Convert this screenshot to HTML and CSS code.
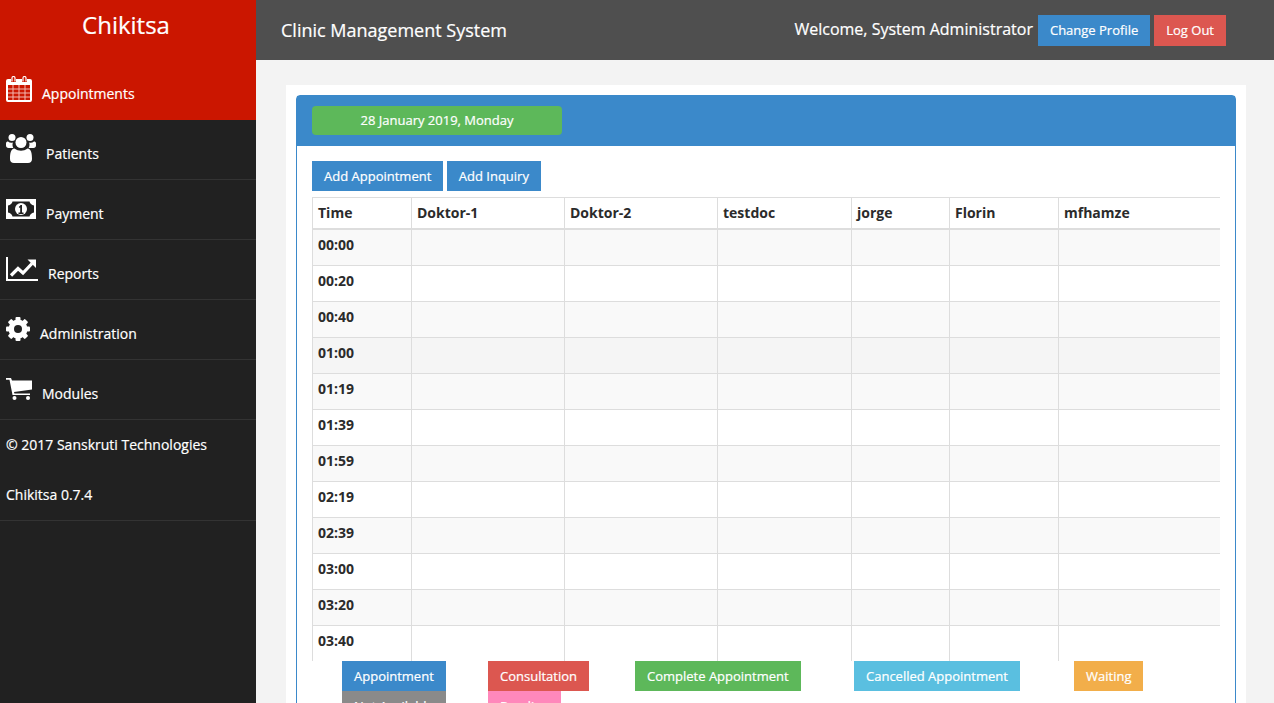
FILE: index.html
```html
<!DOCTYPE html>
<html lang="en">
<head>
    <meta charset="UTF-8">
    <meta name="viewport" content="width=device-width, initial-scale=1.0">
    <title>Chikitsa</title>
    <link rel="stylesheet" href="styles.css">
</head>
<body>
    <aside class="sidebar">
        <div class="brand">Chikitsa</div>
        <nav>
            <a class="nav-item active" href="#">
                <svg class="icon" width="26" height="26" viewBox="0 0 26 26">
                    <path fill="#fff" d="M2 3h3v3h5V3h6v3h5V3h3a2 2 0 0 1 2 2v19a2 2 0 0 1-2 2H2a2 2 0 0 1-2-2V5a2 2 0 0 1 2-2z"/>
                    <path fill="#cb1600" d="M2 9h22v15H2z"/>
                    <path fill="#f4b8b0" d="M2 12.500h22v1H2zM2 16.500h22v1H2zM2 20.500h22v1H2zM6.500 9h1v15h-1zM12.500 9h1v15h-1zM18.500 9h1v15h-1z"/>
                    <path fill="none" stroke="#fff" stroke-width="1.200" d="M6 5.400V2a1.500 1.500 0 0 1 3 0v3.400M17 5.400V2a1.500 1.500 0 0 1 3 0v3.400"/>
                </svg>
                <span class="nav-label">Appointments</span>
            </a>
            <a class="nav-item" href="#">
                <svg class="icon" width="30" height="29" viewBox="0 0 30 29">
                    <circle cx="6" cy="3.500" r="3.500" fill="#fff"/>
                    <circle cx="24" cy="3.500" r="3.500" fill="#fff"/>
                    <path fill="#fff" d="M0 9.500C0 8 1 7.500 2 7.500c1.500 1.200 3 1.400 5 1-.8 1.600-.6 3.500.3 5.500H2.500C1 14 0 13 0 11.500zM30 9.500c0-1.500-1-2-2-2-1.500 1.200-3 1.400-5 1 .8 1.600.6 3.500-.3 5.500h4.800c1.500 0 2.500-1 2.500-2.500z"/>
                    <circle cx="15" cy="8.500" r="5.500" fill="#fff"/>
                    <path fill="#fff" d="M4 25c0-6 .8-10 4.500-10.500 4 3 9 3 13 0C25.200 15 26 19 26 25c0 2.500-1.500 4-4 4H8c-2.500 0-4-1.500-4-4z"/>
                </svg>
                <span class="nav-label">Patients</span>
            </a>
            <a class="nav-item" href="#">
                <svg class="icon" width="30" height="20" viewBox="0 0 30 20">
                    <path fill="#fff" d="M0 0h30v20H0z"/>
                    <path fill="#212121" d="M2 6.500C4.500 6 6 4.500 6.500 2.500h17c.5 2 2 3.500 4.500 4v7c-2.500.5-4 2-4.500 4h-17c-.5-2-2-3.500-4.500-4z"/>
                    <circle cx="15" cy="10" r="6" fill="#fff"/>
                    <path fill="#212121" d="M12.500 13.500h5V15h-5zM14.200 6h1.800v8h-1.800zM12.800 8l1.800-2v2l-1 1z"/>
                </svg>
                <span class="nav-label">Payment</span>
            </a>
            <a class="nav-item" href="#">
                <svg class="icon" width="32" height="24" viewBox="0 0 32 24">
                    <path fill="#fff" d="M0 0h2v22h30v2H0z"/>
                    <path fill="none" stroke="#fff" stroke-width="3.200" d="M5 18.500l7-7 5 4.500 9-9.500"/>
                    <path fill="#fff" d="M21.500 2.500h8.500v8.500z"/>
                </svg>
                <span class="nav-label">Reports</span>
            </a>
            <a class="nav-item" href="#">
                <svg class="icon" width="24" height="24" viewBox="0 0 24 24">
                    <circle cx="12" cy="12" r="6.500" fill="none" stroke="#fff" stroke-width="6"/>
                    <g fill="#fff">
                        <rect x="9.500" y="0" width="5" height="24" rx="1"/>
                        <rect x="0" y="9.500" width="24" height="5" rx="1"/>
                        <rect x="9.500" y="0" width="5" height="24" rx="1" transform="rotate(45 12 12)"/>
                        <rect x="9.500" y="0" width="5" height="24" rx="1" transform="rotate(-45 12 12)"/>
                    </g>
                    <circle cx="12" cy="12" r="4" fill="#212121"/>
                </svg>
                <span class="nav-label">Administration</span>
            </a>
            <a class="nav-item" href="#">
                <svg class="icon" width="26" height="22" viewBox="0 0 26 22">
                    <path fill="#fff" d="M0 0h5l1 2.500h20v9L8 14l.4 1.500H24V17H6.500L3.500 1.700H0z"/>
                    <circle cx="8.500" cy="20" r="2" fill="#fff"/>
                    <circle cx="22" cy="20" r="2" fill="#fff"/>
                </svg>
                <span class="nav-label">Modules</span>
            </a>
        </nav>
        <div class="sidebar-foot">
            <p class="copyright">&copy; 2017 Sanskruti Technologies</p>
            <p class="version">Chikitsa 0.7.4</p>
        </div>
    </aside>

    <div class="page">
        <header class="topbar">
            <span class="system-name">Clinic Management System</span>
            <div class="user-box">
                <span class="welcome">Welcome, System Administrator</span>
                <a class="btn btn-primary" href="#">Change Profile</a>
                <a class="btn btn-danger" href="#">Log Out</a>
            </div>
        </header>

        <main class="content">
            <div class="card">
                <section class="panel">
                    <div class="panel-heading">
                        <div class="date-pill">28 January 2019, Monday</div>
                    </div>
                    <div class="panel-body">
                        <div class="actions">
                            <a class="btn btn-primary" href="#">Add Appointment</a>
                            <a class="btn btn-primary" href="#">Add Inquiry</a>
                        </div>
                        <div class="table-wrap">
                            <table class="schedule">
                                <colgroup>
                                    <col class="col-time">
                                    <col class="col-wide">
                                    <col class="col-wide">
                                    <col class="col-test">
                                    <col class="col-jorge">
                                    <col class="col-florin">
                                    <col>
                                </colgroup>
                                <thead>
                                    <tr><th>Time</th><th>Doktor-1</th><th>Doktor-2</th><th>testdoc</th><th>jorge</th><th>Florin</th><th>mfhamze</th></tr>
                                </thead>
                                <tbody>
                                    <tr><th>00:00</th><td></td><td></td><td></td><td></td><td></td><td></td></tr>
                                    <tr><th>00:20</th><td></td><td></td><td></td><td></td><td></td><td></td></tr>
                                    <tr><th>00:40</th><td></td><td></td><td></td><td></td><td></td><td></td></tr>
                                    <tr class="hovered"><th>01:00</th><td></td><td></td><td></td><td></td><td></td><td></td></tr>
                                    <tr><th>01:19</th><td></td><td></td><td></td><td></td><td></td><td></td></tr>
                                    <tr><th>01:39</th><td></td><td></td><td></td><td></td><td></td><td></td></tr>
                                    <tr><th>01:59</th><td></td><td></td><td></td><td></td><td></td><td></td></tr>
                                    <tr><th>02:19</th><td></td><td></td><td></td><td></td><td></td><td></td></tr>
                                    <tr><th>02:39</th><td></td><td></td><td></td><td></td><td></td><td></td></tr>
                                    <tr><th>03:00</th><td></td><td></td><td></td><td></td><td></td><td></td></tr>
                                    <tr><th>03:20</th><td></td><td></td><td></td><td></td><td></td><td></td></tr>
                                    <tr><th>03:40</th><td></td><td></td><td></td><td></td><td></td><td></td></tr>
                                </tbody>
                            </table>
                        </div>
                        <div class="legend">
                            <div><span class="tag tag-blue">Appointment</span></div>
                            <div><span class="tag tag-red">Consultation</span></div>
                            <div><span class="tag tag-green">Complete Appointment</span></div>
                            <div><span class="tag tag-cyan">Cancelled Appointment</span></div>
                            <div><span class="tag tag-orange">Waiting</span></div>
                            <div><span class="tag tag-grey">Not Available</span></div>
                            <div><span class="tag tag-pink">Pending</span></div>
                        </div>
                    </div>
                </section>
            </div>
        </main>
    </div>
</body>
</html>
```

FILE: styles.css
```css
* {
    box-sizing: border-box;
}

html, body {
    height: 100%;
    margin: 0;
    overflow: hidden;
}

body {
    display: flex;
    font-family: "Open Sans", sans-serif;
    font-size: 14px;
    line-height: 20px;
    background-color: #f3f3f3;
    color: #2b2b2b;
}

a {
    color: white;
    text-decoration: none;
}

/* sidebar */
.sidebar {
    flex: 0 0 256px;
    background-color: #212121;
    color: white;
    -webkit-text-stroke: 0.2px white;
}

.brand {
    height: 60px;
    padding: 8px 4px 0 0;
    background-color: #cb1600;
    color: white;
    font-size: 24px;
    line-height: 34px;
    text-align: center;
}

.nav-item {
    display: flex;
    align-items: center;
    gap: 10px;
    height: 60px;
    padding: 1px 0 0 6px;
    border-bottom: 1px solid #333;
}

.nav-item.active {
    padding-top: 0;
    background-color: #cb1600;
    border-bottom: none;
}

.nav-item .icon {
    flex: none;
    margin-bottom: 3px;
}

.nav-label {
    padding-top: 7px;
}

.sidebar-foot {
    padding: 15px 6px 15px;
    border-bottom: 1px solid #333;
}

.sidebar-foot p {
    margin: 0;
}

.copyright {
    padding-bottom: 30px;
}

/* top bar */
.page {
    flex: 1;
    min-width: 0;
}

.topbar {
    display: flex;
    align-items: center;
    justify-content: space-between;
    height: 60px;
    padding: 0 48px 0 25px;
    background-color: #4f4f4f;
    color: white;
    -webkit-text-stroke: 0.2px white;
}

.system-name {
    font-size: 18px;
}

.user-box {
    display: flex;
    align-items: center;
    gap: 4px;
}

.welcome {
    font-size: 16px;
    margin-right: 1px;
    margin-top: -2px;
}

.btn {
    display: inline-block;
    padding: 5px 12px;
    font-size: 13px;
    line-height: 20px;
    color: white;
    -webkit-text-stroke: 0.2px white;
}

.user-box .btn {
    height: 31px;
}

.btn-primary {
    background-color: #3b89ca;
}

.btn-danger {
    background-color: #dc5750;
}

/* main area */
.content {
    padding: 25px 28px 0 30px;
}

.card {
    padding: 10px;
    background: white;
}

.panel {
    border: 1px solid #3b89ca;
    border-radius: 4px 4px 0 0;
    padding-bottom: 100px;
}

.panel-heading {
    height: 50px;
    padding: 10px 15px;
    background-color: #3b89ca;
}

.date-pill {
    width: 250px;
    height: 29px;
    line-height: 29px;
    background-color: #5db85a;
    border-radius: 4px;
    color: white;
    text-align: center;
    font-size: 13px;
    -webkit-text-stroke: 0.2px white;
}

.panel-body {
    padding: 15px 15px 0;
}

.actions {
    display: flex;
    gap: 3.5px;
    margin-bottom: 6px;
}

.table-wrap {
    height: 464px;
    overflow: hidden;
}

.schedule {
    width: 909px;
    table-layout: fixed;
    border-collapse: collapse;
}

.col-time {
    width: 99px;
}

.col-wide {
    width: 153px;
}

.col-test {
    width: 134px;
}

.col-jorge {
    width: 98px;
}

.col-florin {
    width: 109px;
}

.schedule th, .schedule td {
    height: 36px;
    padding: 0 5px 6px;
    border: 1px solid #ddd;
    text-align: left;
    font-weight: bold;
}

.schedule thead th {
    height: 31px;
    padding-bottom: 0;
    border-bottom-width: 2px;
}

.schedule tbody tr:first-child th,
.schedule tbody tr:first-child td {
    height: 37px;
    padding-bottom: 4px;
}

.schedule tbody tr:nth-child(odd) {
    background-color: #f9f9f9;
}

.schedule tbody tr.hovered {
    background-color: #f5f5f5;
}

.legend {
    display: grid;
    grid-template-columns: 146px 147px 219px 220px auto;
    margin-left: 30px;
}

.tag {
    display: inline-block;
    height: 30px;
    padding: 5px 12px;
    font-size: 13px;
    color: white;
    -webkit-text-stroke: 0.2px white;
}

.tag-blue {
    background-color: #3b89ca;
}

.tag-red {
    background-color: #dc5750;
}

.tag-green {
    background-color: #5db85a;
}

.tag-cyan {
    background-color: #5abfe0;
}

.tag-orange {
    background-color: #f2ae4a;
}

.tag-grey {
    background-color: #8a8a8a;
}

.tag-pink {
    background-color: #ff88bb;
}
```
